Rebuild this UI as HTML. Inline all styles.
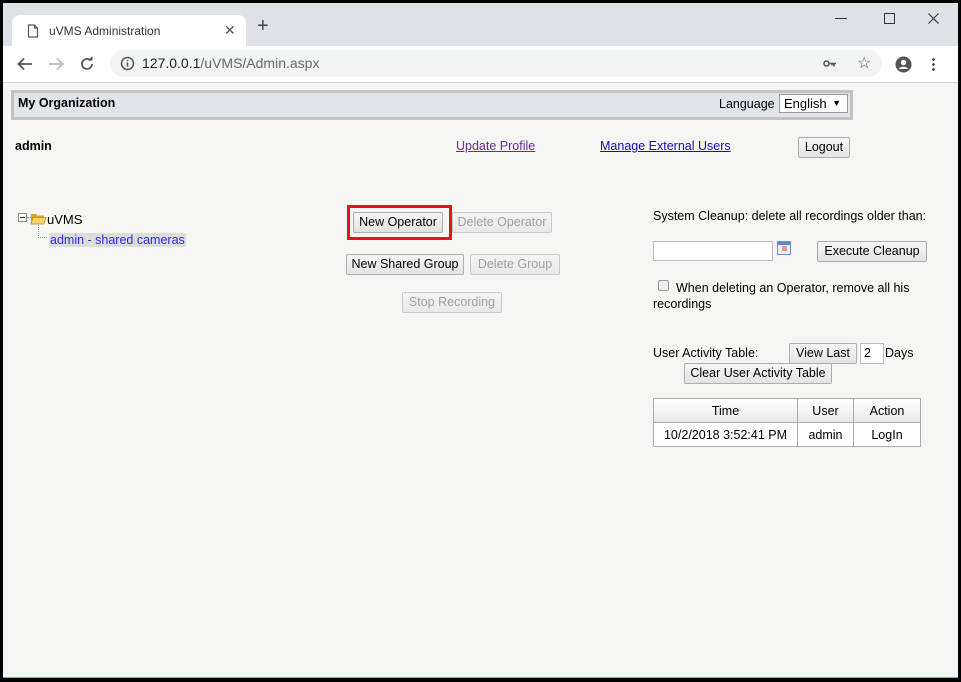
<!DOCTYPE html>
<html><head><meta charset="utf-8">
<style>
*{box-sizing:border-box;margin:0;padding:0}
html,body{width:961px;height:682px;overflow:hidden;background:#000;font-family:"Liberation Sans",Arial,sans-serif;font-size:12.5px;color:#000}
#win{position:absolute;left:3px;top:3px;width:955px;height:675px;background:#f5f5f3;overflow:hidden;border-bottom:1px solid #7aa7d8}
.a{position:absolute;white-space:nowrap}
#tabs{position:absolute;left:0;top:0;width:955px;height:43px;background:#dee1e6}
#tab{position:absolute;left:9px;top:12px;width:234px;height:31px;background:#fff;border-radius:8px 8px 0 0}
#bar{position:absolute;left:0;top:43px;width:955px;height:37px;background:#fff;border-bottom:1px solid #d6d6d6}
#omni{position:absolute;left:107px;top:4px;width:772px;height:27px;background:#f1f3f4;border-radius:14px}
.btn{position:absolute;height:21px;border:1px solid #adadad;background:linear-gradient(#f6f6f6,#e3e3e3);border-radius:2px;font-size:12.5px;text-align:center;line-height:19px;color:#000}
.dis{color:#a0a0a0;border-color:#c8c8c8;background:linear-gradient(#f4f4f4,#e8e8e8)}
a{color:#1a0dab;text-decoration:underline}
td,th{border:1px solid #aaa;font-size:12.5px;font-weight:normal;text-align:center;height:24px}
</style></head><body>
<div id="win">
 <div id="tabs">
  <div id="tab">
   <svg class="a" style="left:15px;top:9px" width="12" height="14" viewBox="0 0 12 14"><path d="M1.5 1h6l3 3v9h-9z M7.5 1v3h3" fill="none" stroke="#555" stroke-width="1.2"/></svg>
   <div class="a" style="left:37px;top:9px;font-size:12px;color:#333">uVMS Administration</div>
   <div class="a" style="left:212px;top:7px;font-size:14px;color:#555">✕</div>
  </div>
  <div class="a" style="left:254px;top:13px;font-size:20px;color:#444;line-height:20px">+</div>
  <div class="a" style="left:832px;top:15px;width:12px;height:1px;background:#333"></div>
  <div class="a" style="left:881px;top:10px;width:11px;height:11px;border:1px solid #333"></div>
  <svg class="a" style="left:925px;top:10px" width="11" height="11" viewBox="0 0 11 11"><path d="M0.5 0.5l10 10M10.5 0.5l-10 10" stroke="#333" stroke-width="1.1"/></svg>
 </div>
 <div id="bar">
  <svg class="a" style="left:14px;top:11px" width="16" height="14" viewBox="0 0 16 14"><path d="M15 7H2M7 1.5L1.5 7 7 12.5" fill="none" stroke="#555" stroke-width="1.8"/></svg>
  <svg class="a" style="left:45px;top:11px" width="16" height="14" viewBox="0 0 16 14"><path d="M1 7h13M9 1.5L14.5 7 9 12.5" fill="none" stroke="#bbb" stroke-width="1.8"/></svg>
  <svg class="a" style="left:76px;top:10px" width="16" height="16" viewBox="0 0 16 16"><path d="M13 8a5 5 0 1 1-1.5-3.6" fill="none" stroke="#555" stroke-width="1.8"/><path d="M9 4.5h4.5V0z" fill="#555"/></svg>
  <div id="omni">
   <svg class="a" style="left:10px;top:6px" width="15" height="15" viewBox="0 0 15 15"><circle cx="7.5" cy="7.5" r="6" fill="none" stroke="#555" stroke-width="1.5"/><path d="M7.5 6.5v4M7.5 4v1.3" stroke="#555" stroke-width="1.6"/></svg>
   <div class="a" style="left:32px;top:5px;font-size:14px;color:#222">127.0.0.1<span style="color:#666">/uVMS/Admin.aspx</span></div>
   <svg class="a" style="left:713px;top:9px" width="14" height="9" viewBox="0 0 14 9"><circle cx="3.5" cy="4.5" r="2.5" fill="none" stroke="#555" stroke-width="1.6"/><path d="M6 4.5h7M11 4.5v3M9 4.5v2" stroke="#555" stroke-width="1.6"/></svg>
   <div class="a" style="left:747px;top:3px;font-size:16px;color:#555">☆</div>
  </div>
  <svg class="a" style="left:892px;top:10px" width="17" height="17" viewBox="0 0 17 17"><circle cx="8.5" cy="8.5" r="8" fill="#555"/><circle cx="8.5" cy="6.5" r="2.7" fill="#fff"/><path d="M3.8 13c1.5-3 7.9-3 9.4 0" fill="#fff"/></svg>
  <div class="a" style="left:929px;top:11px;width:3px;height:14px;background:radial-gradient(circle,#555 1.3px,transparent 1.5px) 0 0/3px 5px"></div>
 </div>
 <div class="a" style="left:8px;top:87px;width:842px;height:30px;border:3px solid #c2c2c2;background:#e1e4e8"></div>
 <div class="a" style="left:15px;top:93px;font-weight:bold;font-size:12.5px">My Organization</div>
 <div class="a" style="left:716px;top:94px">Language</div>
 <div class="a" style="left:776px;top:91px;width:69px;height:19px;border:1px solid #999;background:#fff;font-size:13px;padding-left:4px;line-height:17px">English<span style="position:absolute;right:6px;top:0;font-size:9px">▼</span></div>
 <div class="a" style="left:12px;top:136px;font-weight:bold">admin</div>
 <a class="a" style="left:453px;top:136px;color:#6b2b8f">Update Profile</a>
 <a class="a" style="left:597px;top:136px">Manage External Users</a>
 <div class="btn" style="left:795px;top:134px;width:52px">Logout</div>
 <div class="a" style="left:15px;top:210px;width:9px;height:9px;border:1px solid #888;background:#fff"></div>
 <div class="a" style="left:17px;top:214px;width:5px;height:1px;background:#333"></div>
 <div class="a" style="left:24px;top:214px;width:4px;border-top:1px dotted #888"></div>
 <svg class="a" style="left:27px;top:209px" width="17" height="13" viewBox="0 0 17 13"><path d="M1 2h5l1 1.5h7v8.5H1z" fill="#d9a520"/><path d="M3 5.5h13l-2 6.5H1z" fill="#f6d36b" stroke="#b88a14" stroke-width=".7"/></svg>
 <div class="a" style="left:44px;top:209px;font-size:13px">uVMS</div>
 <div class="a" style="left:35px;top:222px;height:13px;border-left:1px dotted #999"></div>
 <div class="a" style="left:35px;top:234px;width:9px;border-top:1px dotted #999"></div>
 <div class="a" style="left:46px;top:230px;background:#dcdcdc;color:#2d2ddd;padding:0 1px">admin - shared cameras</div>
 <div class="a" style="left:344px;top:202px;width:105px;height:35px;border:3px solid #e3141c"></div>
 <div class="btn" style="left:350px;top:209px;width:90px">New Operator</div>
 <div class="btn dis" style="left:449px;top:209px;width:100px">Delete Operator</div>
 <div class="btn" style="left:343px;top:251px;width:118px">New Shared Group</div>
 <div class="btn dis" style="left:467px;top:251px;width:90px">Delete Group</div>
 <div class="btn dis" style="left:399px;top:289px;width:100px">Stop Recording</div>
 <div class="a" style="left:650px;top:206px">System Cleanup: delete all recordings older than:</div>
 <div class="a" style="left:650px;top:238px;width:120px;height:20px;border:1px solid #bbb;background:#fff"></div>
 <div class="a" style="left:774px;top:238px;width:14px;height:14px;border:1px solid #6a8fc0;background:linear-gradient(#5d8ccc 0 3px,#eef2f8 3px)"><div style="margin:4px 0 0 4px;width:5px;height:5px;background:#d99"></div></div>
 <div class="btn" style="left:814px;top:238px;width:110px">Execute Cleanup</div>
 <div class="a" style="left:655px;top:277px;width:11px;height:11px;border:1px solid #999;border-radius:2px;background:#eee"></div>
 <div class="a" style="left:673px;top:278px">When deleting an Operator, remove all his</div>
 <div class="a" style="left:650px;top:294px">recordings</div>
 <div class="a" style="left:650px;top:343px">User Activity Table:</div>
 <div class="btn" style="left:786px;top:340px;width:68px">View Last</div>
 <div class="a" style="left:857px;top:340px;width:24px;height:21px;border:1px solid #bbb;background:#fff;padding-left:3px;line-height:19px">2</div>
 <div class="a" style="left:882px;top:343px">Days</div>
 <div class="btn" style="left:681px;top:360px;width:148px">Clear User Activity Table</div>
 <table class="a" style="left:650px;top:395px;border-collapse:collapse;border:1px solid #999;background:#fff">
  <tr style="background:linear-gradient(#fff,#e8e8e8)"><th style="width:144px">Time</th><th style="width:56px">User</th><th style="width:67px">Action</th></tr>
  <tr><td>10/2/2018 3:52:41 PM</td><td>admin</td><td>LogIn</td></tr>
 </table>
</div>
</body></html>
